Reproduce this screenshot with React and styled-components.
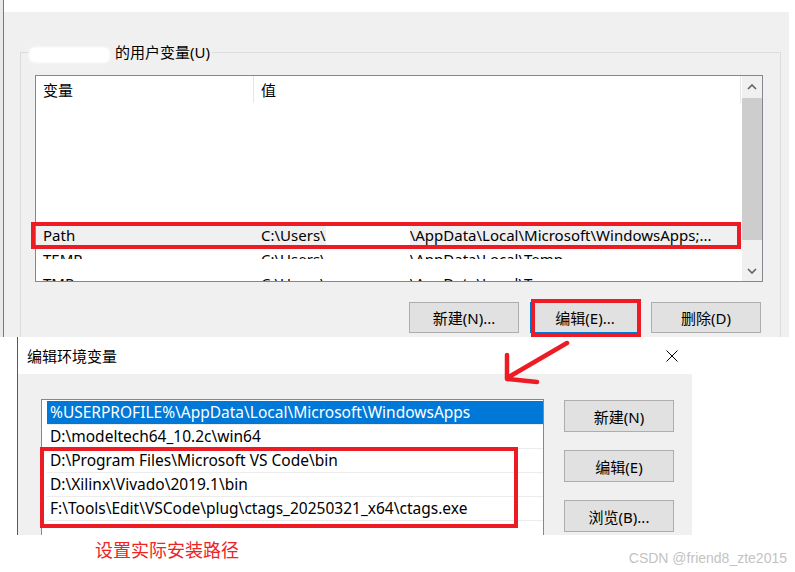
import React from "react";
import styled, { createGlobalStyle } from "styled-components";

const RED = "#ed1c24";

const GlobalStyle = createGlobalStyle`
  html, body {
    margin: 0;
    padding: 0;
    background: #fff;
  }
  body {
    font-family: "Noto Sans", "Noto Sans CJK SC", sans-serif;
    font-size: 15px;
    color: #000;
  }
  *, *::before, *::after { box-sizing: border-box; }
`;

const Page = styled.div`
  position: relative;
  width: 795px;
  height: 572px;
  overflow: hidden;
  display: flex;
  flex-direction: column;
`;

/* ---------- upper window: 环境变量 ---------- */

const TopArea = styled.div`
  display: flex;
  height: 337px;
  flex-shrink: 0;
`;

const EdgeStrip = styled.div`
  width: 4px;
  background: #e9e9e9;
  border-right: 1px solid #777;
`;

const TopColumn = styled.div`
  flex: 1;
  display: flex;
  flex-direction: column;
  padding: 12px 6px 0 0;
`;

const SysWindow = styled.div`
  flex: 1;
  display: flex;
  flex-direction: column;
  background: #f0f0f0;
  padding: 40px 8px 0 16px;
`;

const GroupBox = styled.div`
  position: relative;
  flex: 1;
  display: flex;
  flex-direction: column;
  border: 1px solid #dcdcdc;
  border-bottom: none;
  padding: 22px 17px 0 14px;
`;

const Legend = styled.div`
  position: absolute;
  top: -12px;
  left: 8px;
  display: flex;
  align-items: center;
  gap: 5px;
  padding-right: 2px;
  background: #f0f0f0;
  line-height: 22px;
`;

const NameBlot = styled.span`
  display: inline-block;
  width: 81px;
  height: 16px;
  margin-top: 6px;
  background: #fff;
  border-radius: 6px;
  filter: blur(1px);
`;

const ListView = styled.div`
  width: 728px;
  height: 207px;
  display: flex;
  border: 1px solid #828790;
  background: #fff;
`;

const ListMain = styled.div`
  flex: 1;
  display: flex;
  flex-direction: column;
  overflow-x: visible;
  overflow-y: clip;
`;

const Header = styled.div`
  display: flex;
  height: 27px;
  flex-shrink: 0;
`;

const HeaderCell = styled.div`
  width: ${(p) => p.$w}px;
  display: flex;
  align-items: center;
  padding: 0 0 0 7px;
  border-right: 1px solid #e5e5e5;
`;

const Row = styled.div`
  position: relative;
  display: flex;
  height: 24px;
  flex-shrink: 0;
  background: ${(p) => (p.$selected ? "#f0f0f0" : "transparent")};
  font-size: 15px;
`;

const PathRow = styled(Row)`
  &::after {
    content: "";
    position: absolute;
    left: -5px;
    top: -1px;
    width: 710px;
    height: 27px;
    border: 4px solid ${RED};
    pointer-events: none;
  }
`;

const Cell = styled.div`
  width: ${(p) => p.$w}px;
  height: ${(p) => (p.$clip ? "12px" : "24px")};
  line-height: 24px;
  padding-left: 7px;
  white-space: nowrap;
  overflow: hidden;
  display: flex;
`;

const Blot = styled.span`
  display: inline-block;
  width: ${(p) => p.$w}px;
  height: 20px;
  margin-top: 2px;
  background: #fff;
  filter: blur(0.6px);
  flex-shrink: 0;
`;

const ScrollBar = styled.div`
  width: 20px;
  display: flex;
  flex-direction: column;
  background: #f0f0f0;
`;

const ScrollArrow = styled.div`
  height: ${(p) => p.$h}px;
  display: flex;
  align-items: center;
  justify-content: center;
`;

const Thumb = styled.div`
  height: 142px;
  background: #cdcdcd;
`;

const Track = styled.div`
  flex: 1;
`;

const ButtonRow = styled.div`
  display: flex;
  justify-content: flex-end;
  gap: 11px;
  margin-top: 20px;
  padding-right: 2px;
`;

const WinButton = styled.div`
  position: relative;
  width: 110px;
  height: ${(p) => p.$h || 31}px;
  display: flex;
  align-items: center;
  justify-content: center;
  background: #e1e1e1;
  border: 1px solid ${(p) => (p.$focused ? "#0078d7" : "#adadad")};
  font-size: 15px;
`;

const MarkedButton = styled(WinButton)`
  &::after {
    content: "";
    position: absolute;
    left: 0px;
    top: -4px;
    width: 110px;
    height: 38px;
    border: 4px solid ${RED};
    pointer-events: none;
  }
`;

/* ---------- lower dialog: 编辑环境变量 ---------- */

const DialogRow = styled.div`
  display: flex;
  height: 198px;
  flex-shrink: 0;
  padding-left: 17px;
`;

const Dialog = styled.div`
  width: 675px;
  display: flex;
  flex-direction: column;
  border-left: 1px solid #595959;
  overflow: hidden;
`;

const TitleBar = styled.div`
  height: 37px;
  flex-shrink: 0;
  display: flex;
  align-items: center;
  justify-content: space-between;
  padding: 0 14px 0 9px;
  background: #fff;
  font-size: 15px;
`;

const DialogBody = styled.div`
  flex: 1;
  display: flex;
  gap: 20px;
  padding: 25px 18px 0 23px;
  background: #f0f0f0;
  overflow: hidden;
`;

const ListBox = styled.div`
  width: 503px;
  height: 160px;
  flex-shrink: 0;
  border: 1px solid #828790;
  border-bottom: none;
  background: #fff;
  padding: 1px 0 0 5px;
`;

const Item = styled.div`
  height: 24px;
  line-height: 23px;
  padding-left: 3px;
  border-bottom: 1px solid #ececec;
  font-size: 15.5px;
  white-space: nowrap;
  background: ${(p) => (p.$selected ? "#0078d7" : "transparent")};
  color: ${(p) => (p.$selected ? "#fff" : "#000")};
`;

const MarkedGroup = styled.div`
  position: relative;
  &::after {
    content: "";
    position: absolute;
    left: -7px;
    top: -2px;
    width: 478px;
    height: 81px;
    border: 4px solid ${RED};
    pointer-events: none;
  }
`;

const ButtonColumn = styled.div`
  display: flex;
  flex-direction: column;
  gap: 18px;
  margin-top: 1px;
`;

/* ---------- footer ---------- */

const Footer = styled.div`
  flex: 1;
  display: flex;
  align-items: flex-start;
`;

const Note = styled.div`
  margin: 3px 0 0 95px;
  font-size: 18px;
  line-height: 24px;
  color: #ee2424;
`;

const Watermark = styled.div`
  margin: 15px 8px 0 auto;
  font-family: "Liberation Sans", Arial, sans-serif;
  font-size: 14px;
  line-height: 16px;
  color: #c3c3c3;
`;

const ArrowLayer = styled.svg`
  position: absolute;
  left: 0;
  top: 0;
  pointer-events: none;
`;

const Chevron = ({ up }) => (
  <svg width="10" height="6" viewBox="0 0 10 6">
    <polyline
      points={up ? "1,5 5,1 9,5" : "1,1 5,5 9,1"}
      fill="none"
      stroke="#606060"
      strokeWidth="1.6"
    />
  </svg>
);

const CloseIcon = () => (
  <svg width="12" height="12" viewBox="0 0 12 12">
    <path d="M0.5 0.5 L11.5 11.5 M11.5 0.5 L0.5 11.5" stroke="#000" strokeWidth="1" />
  </svg>
);

const pathItems = [
  "D:\\Program Files\\Microsoft VS Code\\bin",
  "D:\\Xilinx\\Vivado\\2019.1\\bin",
  "F:\\Tools\\Edit\\VSCode\\plug\\ctags_20250321_x64\\ctags.exe",
];

export default function App() {
  return (
    <Page>
      <GlobalStyle />
      <TopArea>
        <EdgeStrip />
        <TopColumn>
          <SysWindow>
            <GroupBox>
              <Legend>
                <NameBlot />
                <span>的用户变量(U)</span>
              </Legend>
              <ListView>
                <ListMain>
                  <Header>
                    <HeaderCell $w={218}>变量</HeaderCell>
                    <HeaderCell $w={487}>值</HeaderCell>
                  </Header>
                  {[0, 1, 2, 3, 4].map((i) => (
                    <Row key={i} />
                  ))}
                  <PathRow $selected>
                    <Cell $w={218}>Path</Cell>
                    <Cell $w={487}>
                      C:\Users\<Blot $w={84} />\AppData\Local\Microsoft\WindowsApps;...
                    </Cell>
                  </PathRow>
                  <Row>
                    <Cell $w={218} $clip>TEMP</Cell>
                    <Cell $w={487} $clip>
                      C:\Users\<Blot $w={84} />\AppData\Local\Temp
                    </Cell>
                  </Row>
                  <Row>
                    <Cell $w={218}>TMP</Cell>
                    <Cell $w={487}>
                      C:\Users\<Blot $w={84} />\AppData\Local\Temp
                    </Cell>
                  </Row>
                </ListMain>
                <ScrollBar>
                  <ScrollArrow $h={22}>
                    <Chevron up />
                  </ScrollArrow>
                  <Thumb />
                  <Track />
                  <ScrollArrow $h={20}>
                    <Chevron />
                  </ScrollArrow>
                </ScrollBar>
              </ListView>
              <ButtonRow>
                <WinButton>新建(N)...</WinButton>
                <MarkedButton $focused>编辑(E)...</MarkedButton>
                <WinButton>删除(D)</WinButton>
              </ButtonRow>
            </GroupBox>
          </SysWindow>
        </TopColumn>
      </TopArea>

      <DialogRow>
        <Dialog>
          <TitleBar>
            <span>编辑环境变量</span>
            <CloseIcon />
          </TitleBar>
          <DialogBody>
            <ListBox>
              <Item $selected>%USERPROFILE%\AppData\Local\Microsoft\WindowsApps</Item>
              <Item>D:\modeltech64_10.2c\win64</Item>
              <MarkedGroup>
                {pathItems.map((p) => (
                  <Item key={p}>{p}</Item>
                ))}
              </MarkedGroup>
            </ListBox>
            <ButtonColumn>
              <WinButton $h={32}>新建(N)</WinButton>
              <WinButton $h={32}>编辑(E)</WinButton>
              <WinButton $h={32}>浏览(B)...</WinButton>
            </ButtonColumn>
          </DialogBody>
        </Dialog>
      </DialogRow>

      <Footer>
        <Note>设置实际安装路径</Note>
        <Watermark>CSDN @friend8_zte2015</Watermark>
      </Footer>

      <ArrowLayer width="795" height="572" viewBox="0 0 795 572">
        <path
          d="M567 343 L507 378 M507 355 L507 379 L537 382"
          fill="none"
          stroke={RED}
          strokeWidth="4.5"
          strokeLinecap="round"
          strokeLinejoin="round"
        />
      </ArrowLayer>
    </Page>
  );
}
